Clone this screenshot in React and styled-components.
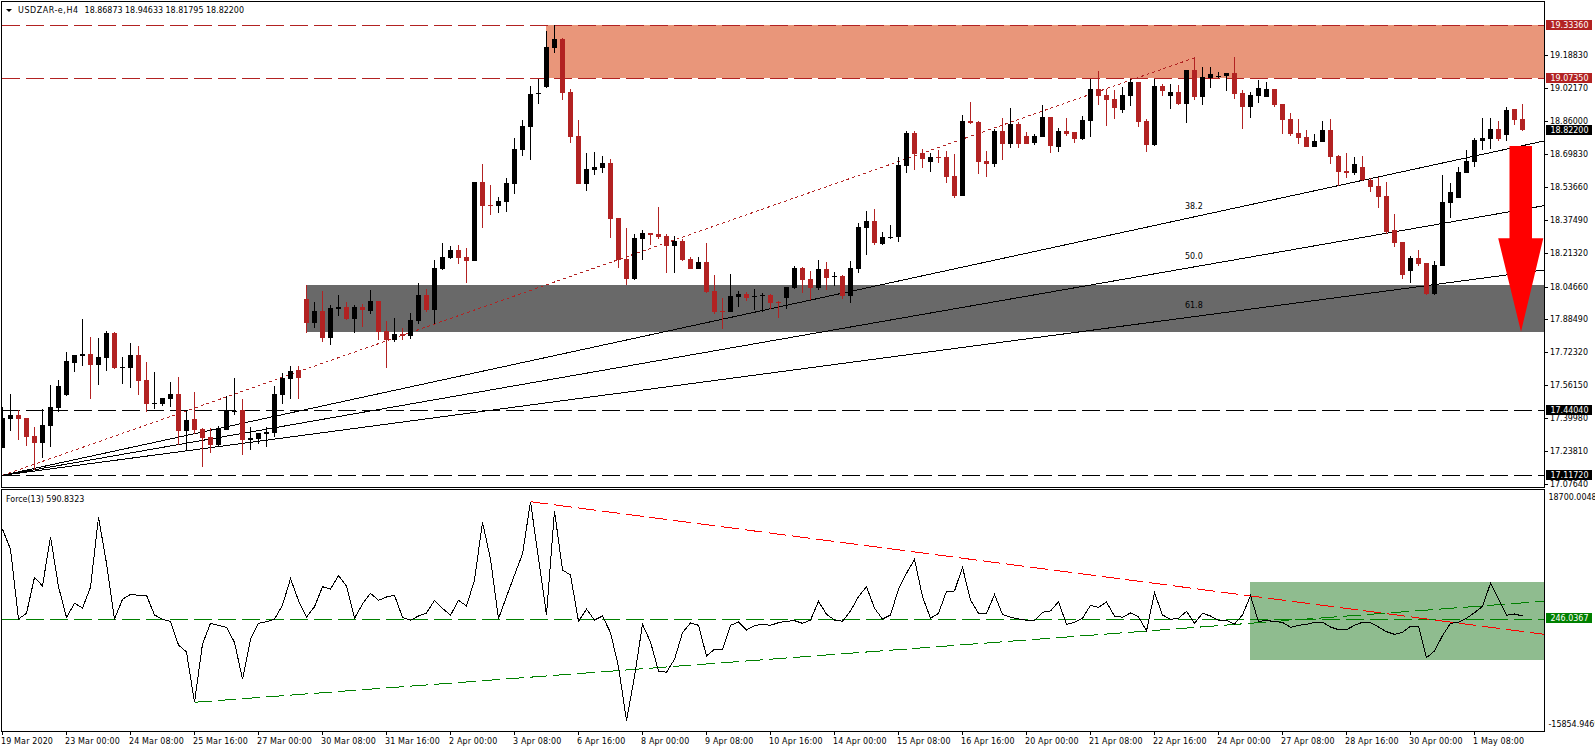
import React from "react";
import styled, {createGlobalStyle} from "styled-components";

const FONT = `"DejaVu Sans Condensed", "DejaVu Sans", "Liberation Sans", sans-serif`;
const FONT_SIZE = "8.85px";
const CANDLE_STEP = 8;
const candleX = (i) => 2 + i * CANDLE_STEP;

// the readings below were taken off two different crops of the chart, this brings them to page pixels
const toY = (v) => Math.round(v < 246.4 ? v * 1.0194 : 250 + (v - 246.4) * 1.0295);

// black?, high, body top, body bottom, low
const candles = [
  [1, 398.6, 410, 438.4, 438.4], [1, 386.3, 406.7, 410.6, 422], [0, 402, 406.7, 410.6, 431], [0, 409.6, 409.6, 427.7, 436.5],
  [0, 418, 427, 433.6, 460], [1, 401, 416.4, 433.6, 448], [1, 377.5, 399, 417, 438], [1, 372.7, 378.5, 399.6, 403.4],
  [1, 345.5, 354.2, 387.3, 388], [1, 348, 348.4, 355.8, 364.6], [1, 313.4, 347.8, 349, 358.8], [0, 331, 347.4, 358, 390.8],
  [1, 331.9, 350.3, 358, 378], [1, 325, 327, 351, 363.6], [0, 326, 327, 361, 362], [1, 350.3, 360, 361, 377],
  [1, 336.7, 348.4, 361, 380.5], [0, 339.7, 348.4, 373.7, 387], [0, 355.2, 372.7, 396, 403.4], [1, 365, 395.4, 396, 400.9],
  [1, 390, 390.2, 396, 398], [1, 374.6, 386.3, 391, 399], [0, 369.8, 386.3, 422.2, 435.5], [1, 401.8, 411.5, 422.2, 441.3],
  [0, 384.3, 410.6, 421.3, 425.1], [0, 419.3, 420.3, 429, 456.9], [0, 419.3, 428, 435.8, 443.3], [1, 417.4, 419.3, 435.8, 436.5],
  [1, 388.2, 401.8, 421.3, 421.3], [1, 370.7, 402.5, 403.4, 406.7], [0, 391.1, 401.8, 431, 445.2], [1, 418.3, 429.4, 430.6, 440.7],
  [1, 424, 424.2, 430, 434.5], [1, 418.3, 423.2, 424.8, 437.4], [1, 378.5, 386.3, 424.2, 428], [1, 365.9, 370.7, 387.3, 396],
  [1, 359, 364, 371.7, 391.1], [0, 359, 363, 370.7, 391.1], [0, 280.4, 294, 317.3, 327], [1, 297, 305.7, 317.3, 322.2],
  [0, 286.2, 305.7, 331.9, 335.8], [1, 299.8, 302.7, 331.9, 338.7], [1, 290, 302, 303.4, 310.5], [0, 296.9, 301.8, 313.4, 314.4],
  [1, 299.8, 301.8, 313.4, 327], [0, 298.9, 301.8, 304.7, 321.2], [1, 285.3, 296, 305.7, 308.6], [0, 296, 296, 326, 333.8],
  [0, 315.4, 325, 333.8, 361], [1, 312.5, 328, 333.8, 335.8], [0, 322.2, 328, 330, 333.8], [1, 307.6, 314.4, 330, 332.9],
  [1, 278.5, 290, 315.4, 318.3], [0, 284.3, 290, 304.7, 306.6], [1, 256.1, 263.9, 304.7, 318.3], [1, 238, 253.2, 264.9, 266],
  [1, 241.3, 245.5, 254.2, 255.5], [0, 240, 246.4, 254, 260], [0, 243.6, 253, 257, 278], [1, 178.5, 178.5, 257, 257],
  [0, 161, 178.5, 202, 223.7], [0, 181.5, 201, 202, 211], [1, 193, 197, 202, 209], [1, 174.6, 179.5, 198, 208],
  [1, 135.4, 146, 180.5, 190], [1, 117.7, 123.6, 147, 153], [1, 84.4, 92, 124.6, 157], [1, 77.5, 91.5, 92.5, 102],
  [1, 30.4, 46, 85.3, 86.3], [1, 25, 38.3, 47, 52], [0, 37.3, 38.3, 91.2, 98], [0, 87.3, 90.3, 134.4, 140.3],
  [0, 117.7, 133.4, 180.5, 180.5], [1, 150, 165.8, 180.5, 187.4], [1, 149, 163.8, 166.8, 171.7], [1, 153, 160, 164.8, 169.7],
  [0, 156, 160, 214.8, 233.5], [0, 213.9, 213.9, 256, 263.9], [0, 223.7, 255, 274.6, 280.4], [1, 229.6, 233.5, 274.6, 275.5],
  [1, 225.6, 228.6, 234.5, 256], [0, 228.6, 228.6, 230.5, 240], [0, 203, 229.6, 232.5, 234.5], [0, 229.6, 231.5, 241.3, 268.7],
  [1, 231.5, 236.4, 241.3, 268.7], [0, 234.5, 236.4, 256, 257], [0, 253.2, 255, 264.9, 264.9], [1, 253.2, 258, 264.9, 264.9],
  [0, 238.4, 258, 287.2, 288.2], [0, 270.7, 286.2, 306.6, 308.6], [0, 293, 305.6, 306.4, 323.1], [1, 269.7, 291, 306.6, 306.6],
  [1, 286.2, 289.1, 292, 301.8], [0, 287.2, 289.1, 293, 296], [1, 284.3, 291.2, 292, 304.7], [1, 288.2, 290.4, 291.2, 306.6],
  [0, 289.1, 290.1, 297.9, 303.7], [0, 296, 297, 298.2, 312.5], [1, 282.3, 282.3, 293, 303.7], [1, 262, 263.9, 283.3, 284.3],
  [0, 262.9, 263.9, 275.5, 288.2], [0, 266.8, 274.6, 283.3, 295], [1, 256.1, 264.9, 283.3, 285.3], [0, 258, 264.9, 273.6, 285.3],
  [1, 267.8, 272, 272.8, 281.4], [0, 270.7, 271.7, 291, 294], [1, 257, 263.9, 291, 297.9], [1, 218.8, 222.7, 264.9, 268.7],
  [1, 207, 216.8, 223.7, 251], [0, 205, 216.8, 238.4, 240], [1, 227.6, 232.5, 239.4, 240], [1, 220.7, 232, 233, 234.5],
  [1, 154, 161.9, 232.5, 237.4], [1, 128.5, 130.5, 162.8, 169.7], [0, 128.5, 130.5, 151, 166.8], [0, 146.2, 150, 156, 164.8],
  [1, 150, 154, 158.9, 168.7], [0, 147, 153.6, 154.4, 160], [0, 148, 154, 173.6, 179.5], [0, 151, 172.7, 192.3, 194.2],
  [1, 112.8, 118.7, 192.3, 192.3], [0, 100, 118.7, 120.7, 121.6], [0, 118.7, 119.7, 158.9, 170.7], [0, 148, 158, 160.9, 173.6],
  [1, 126.5, 128.5, 160.9, 163.8], [0, 115.8, 128.5, 141.3, 157], [1, 106, 121.6, 141.3, 145.2], [0, 119.7, 121.6, 141.3, 145.2],
  [0, 129.5, 133.4, 141.3, 141.3], [1, 131.5, 133.4, 140.3, 142.2], [1, 103, 114.8, 134.4, 134.4], [0, 114.8, 114.8, 143.2, 150],
  [1, 125.6, 128.5, 144.2, 149], [0, 115.8, 128.5, 131.5, 133.4], [0, 129.5, 129.5, 136.4, 140.3], [1, 113.8, 117.7, 136.4, 137.3],
  [1, 77.5, 87.3, 118.7, 134.4], [0, 69.7, 87.3, 94.2, 103], [0, 87.3, 93.2, 98, 123.6], [0, 88.3, 97, 106, 116.7],
  [1, 85.3, 93.2, 107.9, 110.9], [1, 77.5, 80.4, 94.2, 104], [0, 80.4, 80.4, 119.7, 124.6], [0, 116.7, 118.7, 142.2, 149],
  [1, 77.5, 84.4, 142.2, 143], [0, 82.4, 84.4, 89.3, 94.2], [1, 82.4, 90.3, 94.2, 106.9], [0, 83.4, 90.3, 102, 103],
  [1, 68.7, 68.7, 102, 120.7], [0, 56, 68.7, 95.2, 98], [1, 65.7, 75.5, 95.2, 103], [1, 65.7, 72.6, 76.5, 86.3],
  [1, 70.6, 74.2, 75, 76.5], [1, 71.6, 71.6, 74.6, 89.3], [0, 56, 71.6, 92.2, 97], [0, 88.3, 91.2, 105, 126.5],
  [1, 90, 93.2, 105, 115.8], [1, 78.5, 86.3, 94.2, 101], [1, 80.4, 87.3, 95.2, 95.2], [0, 87.3, 87.3, 103, 105],
  [0, 102, 102, 117.7, 131.5], [0, 110.9, 116.7, 131.5, 133.4], [0, 116.7, 130.5, 135.4, 141.3], [0, 127.5, 134.4, 144.2, 144.2],
  [1, 131.5, 138.3, 144.2, 144.2], [1, 118.7, 127.5, 139.3, 139.3], [0, 116.7, 127.5, 154, 160.9], [0, 152, 153, 168.7, 182.5],
  [0, 150, 167.8, 169.7, 174.6], [1, 154, 160.9, 169.7, 171.7], [0, 153, 163.8, 176.6, 177.6], [0, 174.6, 176.6, 183.4, 188.4],
  [0, 173.6, 182.5, 193.3, 204], [0, 178.5, 192.3, 227.6, 229.6], [0, 210, 225.6, 238.4, 242.3], [0, 237.4, 237.4, 270.7, 274.6],
  [1, 252.2, 254.2, 266.8, 278.5], [0, 246.4, 254.2, 260, 262], [0, 259, 259, 289.1, 290.1], [1, 257, 261, 289.1, 290.1],
  [1, 171.7, 198, 262, 262], [1, 179.5, 188.4, 199, 213.9], [1, 163.8, 168.7, 194.2, 194.2], [1, 147, 158, 169.7, 169.7],
  [1, 135.4, 137.3, 158.9, 163.8], [1, 115.8, 135.4, 138.3, 147], [1, 115.8, 126.5, 136.4, 146.2], [0, 118.7, 126.5, 136.4, 138.3],
  [1, 105, 107.9, 132.4, 138.3], [0, 106.9, 106.9, 117.7, 122.6], [0, 102, 116.7, 127.5, 128.5],
];

// force index line, one reading per candle
const force = [
  148, 208, 417, 400, 292, 318, 170, 320, 412, 370, 384, 322, 112, 250, 417, 358, 343, 346, 346, 405, 418, 424, 495, 516,
  667, 492, 430, 436, 442, 487, 598, 478, 430, 425, 418, 375, 296, 362, 412, 380, 320, 327, 287, 318, 415, 372, 340, 361,
  351, 346, 412, 421, 408, 399, 361, 385, 406, 361, 378, 300, 127, 237, 416, 350, 285, 222, 65, 235, 405, 93, 270, 285,
  424, 388, 420, 408, 458, 560, 722, 590, 433, 486, 573, 577, 538, 458, 429, 436, 528, 508, 508, 436, 426, 450, 437, 433,
  436, 428, 424, 422, 430, 420, 364, 403, 420, 424, 393, 350, 320, 385, 417, 405, 327, 280, 238, 350, 415, 400, 334, 333,
  262, 360, 400, 400, 344, 403, 412, 417, 421, 421, 397, 393, 365, 433, 427, 415, 376, 382, 366, 408, 412, 399, 410, 453,
  338, 405, 418, 415, 394, 430, 400, 408, 421, 421, 432, 405, 347, 425, 421, 425, 427, 442, 436, 433, 427, 427, 441, 449,
  449, 436, 427, 428, 441, 455, 463, 457, 439, 439, 533, 513, 467, 430, 427, 415, 398, 379, 310, 358, 406, 402, 408,
];

const priceTicks = [
  ["19.18830", 55], ["19.02170", 88.3], ["18.86000", 121], ["18.69830", 154.3], ["18.53660", 187.3], ["18.37490", 220.3],
  ["18.21320", 253.3], ["18.04660", 286.7], ["17.88490", 319.3], ["17.72320", 352.3], ["17.56150", 385.3], ["17.39980", 418.3],
  ["17.23810", 451.3], ["17.07640", 484.3],
];

const priceFlags = [
  ["19.33360", 24.5, "#b22222"], ["19.07350", 77.7, "#b22222"], ["18.82200", 129.7, "#000"],
  ["17.44040", 409.7, "#000"], ["17.11720", 474.7, "#000"],
];

const times = [
  "19 Mar 2020", "23 Mar 00:00", "24 Mar 08:00", "25 Mar 16:00", "27 Mar 00:00", "30 Mar 08:00", "31 Mar 16:00", "2 Apr 00:00",
  "3 Apr 08:00", "6 Apr 16:00", "8 Apr 00:00", "9 Apr 08:00", "10 Apr 16:00", "14 Apr 00:00", "15 Apr 08:00", "16 Apr 16:00",
  "20 Apr 00:00", "21 Apr 08:00", "22 Apr 16:00", "24 Apr 00:00", "27 Apr 08:00", "28 Apr 16:00", "30 Apr 00:00", "1 May 08:00",
];

const ORIGIN = {x: 2.7, y: 475.3};
const RIGHT = 1544;

export default function App() {
  const forceLine = force.map((z, i) => `${candleX(i) + 0.5},${(480 + z / 3).toFixed(1)}`).join(" ");

  return (
    <Page>
      <GlobalStyle />
      <ChartRow>
        <Pane $height={487}>
          <Title>
            <Caret />
            <SymbolName>USDZAR-e,H4</SymbolName>
            <span>18.86873 18.94633 18.81795 18.82200</span>
          </Title>
          <ChartSvg width={1542} height={485} viewBox="2 2 1542 485">
            <g shapeRendering="crispEdges">
              <rect x="546" y="25" width="998" height="53" fill="#e9967a" />
              <rect x="306" y="285" width="1238" height="47" fill="#696969" />
              <LevelLine y={25.5} color="#b22222" />
              <LevelLine y={78.5} color="#b22222" />
              <LevelLine y={410.5} color="#000" />
              <LevelLine y={475.5} color="#000" />
              <line x1={ORIGIN.x} y1={ORIGIN.y} x2="1194.8" y2="57.7" stroke="#b22222" strokeDasharray="3 3" />
              <line x1={ORIGIN.x} y1={ORIGIN.y} x2={RIGHT} y2="141" stroke="#000" />
              <line x1={ORIGIN.x} y1={ORIGIN.y} x2={RIGHT} y2="205.7" stroke="#000" />
              <line x1={ORIGIN.x} y1={ORIGIN.y} x2={RIGHT} y2="270" stroke="#000" />
              {candles.map(([black, high, top, bottom, low], i) => {
                const color = black ? "#000" : "#b22222";
                const y = toY(top);
                return (
                  <g key={i} fill={color}>
                    <rect x={candleX(i)} y={toY(high)} width="1" height={Math.max(toY(low) - toY(high), 1)} />
                    <rect x={candleX(i) - 2} y={y} width="5" height={Math.max(toY(bottom) - y, 1)} />
                  </g>
                );
              })}
            </g>
            <FibLabel x="1185" y="209">38.2</FibLabel>
            <FibLabel x="1185" y="259">50.0</FibLabel>
            <FibLabel x="1185" y="307.6">61.8</FibLabel>
            <polygon
              points="1509.5,146 1532,146 1532,238.3 1543.3,238.3 1521,331.7 1498.2,238.3 1509.5,238.3"
              fill="#ff0000"
            />
          </ChartSvg>
        </Pane>
        <PriceAxis>
          {priceTicks.map(([label, y]) => (
            <PriceTick key={label} $y={y - 1}>{label}</PriceTick>
          ))}
          {priceFlags.map(([label, y, color]) => (
            <PriceFlag key={label} $y={y - 1} $color={color}>{label}</PriceFlag>
          ))}
        </PriceAxis>
      </ChartRow>

      <ChartRow $gap>
        <Pane $height={243}>
          <Title $indicator>Force(13) 590.8323</Title>
          <ChartSvg width={1542} height={241} viewBox="2 490 1542 241">
            <g shapeRendering="crispEdges">
              <rect x="1250" y="582" width="294" height="78" fill="#8fbc8f" />
              <LevelLine y={619.5} color="#008000" />
              <line x1="194.5" y1="702.3" x2={RIGHT} y2="601.3" stroke="#008000" strokeDasharray="18 6" />
              <line x1="530.5" y1="501.7" x2={RIGHT} y2="634.3" stroke="#ff0000" strokeDasharray="18 6" />
              <polyline points={forceLine} fill="none" stroke="#000" strokeWidth="1" />
            </g>
          </ChartSvg>
        </Pane>
        <PriceAxis>
          <ForceTick $y={7.7}>18700.0048</ForceTick>
          <ForceTick $y={235.3}>-15854.9469</ForceTick>
          <PriceFlag $y={129.3} $color="#008000">246.0367</PriceFlag>
        </PriceAxis>
      </ChartRow>

      <TimeAxis>
        {times.map((label) => (
          <TimeLabel key={label}>{label}</TimeLabel>
        ))}
      </TimeAxis>
    </Page>
  );
}

function LevelLine({y, color}) {
  return <line x1="2" y1={y} x2={RIGHT} y2={y} stroke={color} strokeDasharray="18 6" />;
}

const GlobalStyle = createGlobalStyle`
  html, body {
    margin: 0;
    background: #fff;
    overflow: hidden;
  }
`;

const Page = styled.div`
  box-sizing: border-box;
  width: 1595px;
  height: 752px;
  padding: 1px 0 0 1px;
  background: #fff;
  color: #000;
  font-family: ${FONT};
  font-stretch: condensed;
  font-size: ${FONT_SIZE};
`;

const ChartRow = styled.div`
  display: flex;
  margin-top: ${(p) => (p.$gap ? "1px" : "0")};
`;

const Pane = styled.div`
  position: relative;
  flex: none;
  box-sizing: border-box;
  width: 1544px;
  height: ${(p) => p.$height}px;
  border: 1px solid #000;
  overflow: hidden;
`;

const ChartSvg = styled.svg`
  display: block;
`;

const Title = styled.div`
  position: absolute;
  top: ${(p) => (p.$indicator ? "4px" : "3px")};
  left: 4px;
  display: flex;
  align-items: center;
  gap: 6px;
  line-height: 11px;
  white-space: nowrap;
`;

const SymbolName = styled.span`
  letter-spacing: 0.56px;
`;

const Caret = styled.span`
  width: 0;
  height: 0;
  border-left: 3px solid transparent;
  border-right: 3px solid transparent;
  border-top: 3px solid #000;
`;

const FibLabel = styled.text`
  font-family: ${FONT};
  font-stretch: condensed;
  font-size: ${FONT_SIZE};
  fill: #000;
`;

const PriceAxis = styled.div`
  position: relative;
  flex: 1;
  overflow: hidden;
`;

const PriceTick = styled.div.attrs((p) => ({style: {top: `${p.$y - 5}px`}}))`
  position: absolute;
  left: 0;
  padding-left: 5px;
  height: 10px;
  line-height: 10px;
  white-space: nowrap;

  &::before {
    content: "";
    position: absolute;
    left: 0;
    top: 5px;
    width: 3px;
    height: 1px;
    background: #000;
  }
`;

const ForceTick = styled(PriceTick)`
  padding-left: 3.5px;

  &::before {
    display: none;
  }
`;

const PriceFlag = styled.div.attrs((p) => ({style: {top: `${p.$y - 5}px`}}))`
  position: absolute;
  z-index: 1;
  left: 1px;
  box-sizing: border-box;
  width: 46px;
  height: 10px;
  padding-left: 4.5px;
  line-height: 10px;
  background: ${(p) => p.$color};
  color: #fff;
  white-space: nowrap;
`;

const TimeAxis = styled.div`
  display: flex;
  height: 20px;
`;

const TimeLabel = styled.div`
  position: relative;
  flex: none;
  width: 64px;
  padding-top: 4px;
  line-height: 10px;
  letter-spacing: 0.15px;
  white-space: nowrap;

  &::before {
    content: "";
    position: absolute;
    left: 1px;
    top: 0;
    width: 1px;
    height: 3px;
    background: #000;
  }
`;
